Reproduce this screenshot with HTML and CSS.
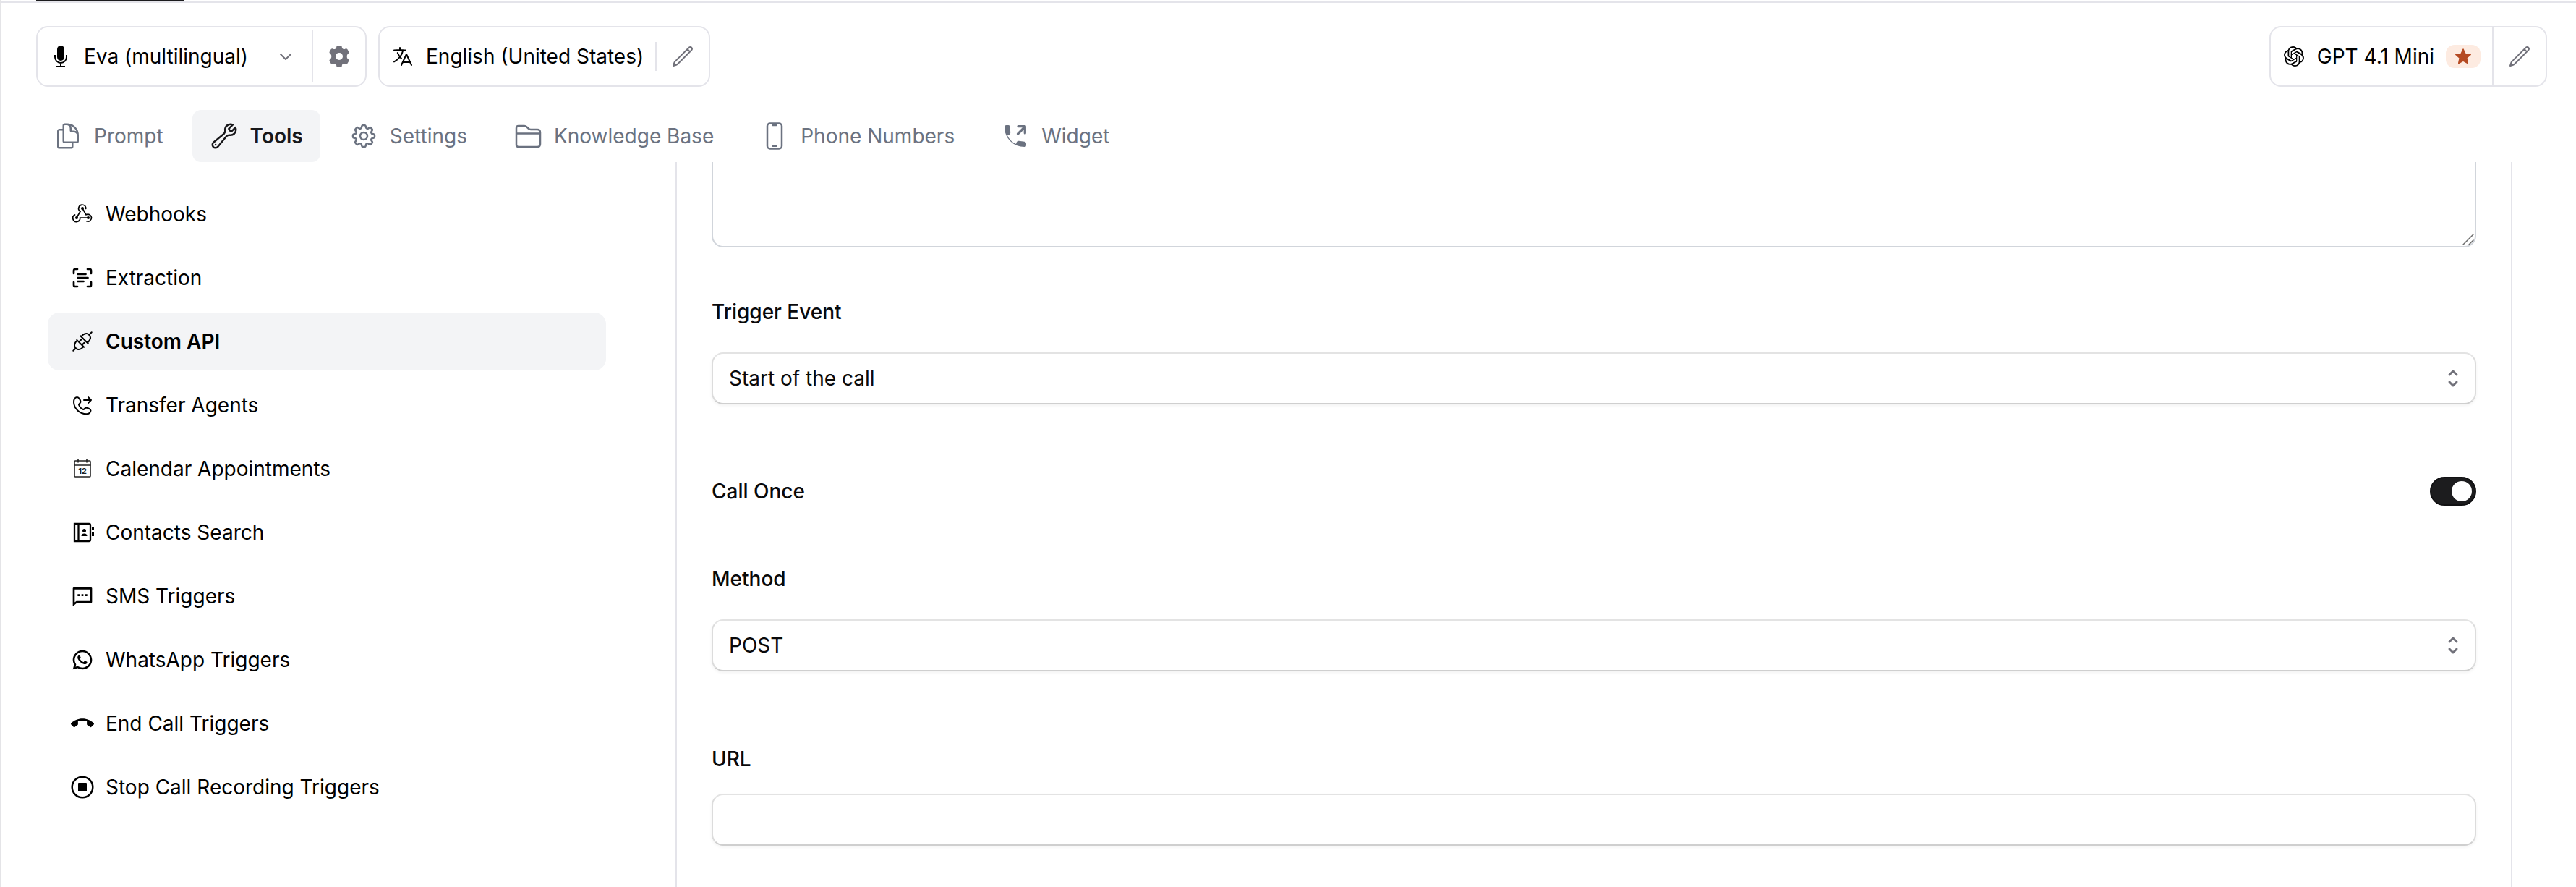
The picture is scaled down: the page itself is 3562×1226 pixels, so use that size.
FILE: index.html
```html
<!DOCTYPE html>
<html lang="en">
  <head>
    <meta charset="UTF-8" />
    <meta name="viewport" content="width=device-width, initial-scale=1.0" />
    <title>Custom API</title>
    <link rel="stylesheet" href="styles.css">
  </head>
  <body>
    <div class="page">
      <div class="top-strip"><div class="top-indicator"></div></div>

      <header class="toolbar">
        <div class="box">
          <button type="button" class="box-button voice">
            <svg class="icon" viewBox="0 0 32 32" fill="none" stroke="currentColor" stroke-width="2">
              <rect x="11" y="1" width="10" height="21" rx="5" fill="currentColor" stroke="none" />
              <path d="M8 14v3a8 8 0 0 0 16 0v-3M16 25v5M10 30h12" />
            </svg>
            <span>Eva (multilingual)</span>
            <svg class="chevron" viewBox="0 0 32 32" fill="none" stroke="currentColor" stroke-width="2" stroke-linecap="round" stroke-linejoin="round">
              <path d="M9 13l7 7 7-7" />
            </svg>
          </button>
          <div class="divider"></div>
          <button type="button" class="box-button gray" aria-label="Voice settings">
            <svg class="icon" viewBox="0 0 32 32" fill="currentColor">
              <path fill-rule="evenodd" d="M14 1h4q1.500 0 1.700 1.500l.3 1.700q.3.900 1.500 1.500 1 .6 2 .2l1.600-.6q1.400-.5 2.200.8l2 3.500q.7 1.300-.4 2.200l-1.300 1.100q-.9.8-.9 3.100t.9 3.100l1.300 1.100q1.100.9.4 2.200l-2 3.500q-.8 1.300-2.200.8l-1.600-.6q-1-.4-2 .2-1.200.6-1.500 1.500l-.3 1.700Q19.500 31 18 31h-4q-1.500 0-1.700-1.500l-.3-1.700q-.3-.9-1.500-1.500-1-.6-2-.2l-1.600.6q-1.400.5-2.200-.8l-2-3.500q-.7-1.300.4-2.200l1.300-1.100q.9-.8.9-3.100t-.9-3.100l-1.300-1.100q-1.100-.9-.4-2.200l2-3.500q.8-1.300 2.200-.8l1.600.6q1 .4 2-.2 1.200-.6 1.500-1.500l.3-1.700Q12.500 1 14 1zM16 11a5 5 0 1 0 0 10 5 5 0 0 0 0-10z" />
            </svg>
          </button>
        </div>

        <div class="box">
          <button type="button" class="box-button language">
            <svg class="icon" viewBox="0 0 24 24" fill="none" stroke="currentColor" stroke-width="1.5" stroke-linecap="round" stroke-linejoin="round">
              <path d="m10.500 21 5.250-11.250L21 21m-9-3h7.500M3 5.621a48.474 48.474 0 0 1 6-.371m0 0c1.120 0 2.233.038 3.334.114M9 5.250V3m3.334 2.364C11.176 10.658 7.690 15.080 3 17.502m9.334-12.138c.896.061 1.785.147 2.666.257m-4.589 8.495a18.023 18.023 0 0 1-3.827-5.802" />
            </svg>
            <span>English (United States)</span>
          </button>
          <div class="divider short"></div>
          <button type="button" class="box-button gray" aria-label="Edit language">
            <svg class="icon" viewBox="0 0 24 24" fill="none" stroke="currentColor" stroke-width="1.5" stroke-linecap="round" stroke-linejoin="round">
              <path d="M16.862 4.487l1.687-1.688a1.875 1.875 0 1 1 2.652 2.652L6.832 19.820a4.500 4.500 0 0 1-1.897 1.130l-2.685.8.8-2.685a4.500 4.500 0 0 1 1.130-1.897L16.863 4.487Zm0 0L19.500 7.125" />
            </svg>
          </button>
        </div>

        <div class="box model">
          <button type="button" class="box-button">
            <svg class="icon openai" viewBox="0 0 24 24" fill="currentColor">
              <path d="M22.2819 9.8211a5.9847 5.9847 0 0 0-.5157-4.9108 6.0462 6.0462 0 0 0-6.5098-2.9A6.0651 6.0651 0 0 0 4.9807 4.1818a5.9847 5.9847 0 0 0-3.9977 2.9 6.0462 6.0462 0 0 0 .7427 7.0966 5.98 5.98 0 0 0 .511 4.9107 6.051 6.051 0 0 0 6.5146 2.9001A5.9847 5.9847 0 0 0 13.2599 24a6.0557 6.0557 0 0 0 5.7718-4.2058 5.9894 5.9894 0 0 0 3.9977-2.9001 6.0557 6.0557 0 0 0-.7475-7.0729zm-9.022 12.6081a4.4755 4.4755 0 0 1-2.8764-1.0408l.1419-.0804 4.7783-2.7582a.7948.7948 0 0 0 .3927-.6813v-6.7369l2.02 1.1686a.071.071 0 0 1 .038.052v5.5826a4.504 4.504 0 0 1-4.4945 4.4944zm-9.6607-4.1254a4.4708 4.4708 0 0 1-.5346-3.0137l.142.0852 4.783 2.7582a.7712.7712 0 0 0 .7806 0l5.8428-3.3685v2.3324a.0804.0804 0 0 1-.0332.0615L9.74 19.9502a4.4992 4.4992 0 0 1-6.1408-1.6464zM2.3408 7.8956a4.485 4.485 0 0 1 2.3655-1.9728V11.6a.7664.7664 0 0 0 .3879.6765l5.8144 3.3543-2.0201 1.1685a.0757.0757 0 0 1-.071 0l-4.8303-2.7865A4.504 4.504 0 0 1 2.3408 7.872zm16.5963 3.8558L13.1038 8.364 15.1192 7.2a.0757.0757 0 0 1 .071 0l4.8303 2.7913a4.4944 4.4944 0 0 1-.6765 8.1042v-5.6772a.79.79 0 0 0-.407-.667zm2.0107-3.0231l-.142-.0852-4.7735-2.7818a.7759.7759 0 0 0-.7854 0L9.409 9.2297V6.8974a.0662.0662 0 0 1 .0284-.0615l4.8303-2.7866a4.4992 4.4992 0 0 1 6.6802 4.66zM8.3065 12.863l-2.02-1.1638a.0804.0804 0 0 1-.038-.0567V6.0742a4.4992 4.4992 0 0 1 7.3757-3.4537l-.142.0805L8.704 5.459a.7948.7948 0 0 0-.3927.6813zm1.0976-2.3654l2.602-1.4998 2.6069 1.4998v2.9994l-2.5974 1.4997-2.6067-1.4997Z" />
            </svg>
            <span>GPT 4.1 Mini</span>
            <span class="badge">
              <svg viewBox="0 0 24 24" fill="currentColor" stroke="currentColor" stroke-width="1.5" stroke-linejoin="round">
                <path d="M12 2l3 6.600 7.200.8-5.400 4.800 1.500 7.300L12 18l-6.300 3.500 1.500-7.300L1.800 9.400 9 8.600z" />
              </svg>
            </span>
          </button>
          <div class="divider full"></div>
          <button type="button" class="box-button gray" aria-label="Edit model">
            <svg class="icon" viewBox="0 0 24 24" fill="none" stroke="currentColor" stroke-width="1.5" stroke-linecap="round" stroke-linejoin="round">
              <path d="M16.862 4.487l1.687-1.688a1.875 1.875 0 1 1 2.652 2.652L6.832 19.820a4.500 4.500 0 0 1-1.897 1.130l-2.685.8.8-2.685a4.500 4.500 0 0 1 1.130-1.897L16.863 4.487Zm0 0L19.500 7.125" />
            </svg>
          </button>
        </div>
      </header>

      <nav class="tabs">
        <a href="#" class="tab">
          <svg viewBox="0 0 24 24"><path d="M15.750 17.250v3.375c0 .621-.504 1.125-1.125 1.125h-9.750a1.125 1.125 0 0 1-1.125-1.125V7.875c0-.621.504-1.125 1.125-1.125H6.750a9.060 9.060 0 0 1 1.500.124m7.500 10.376h3.375c.621 0 1.125-.504 1.125-1.125V11.250c0-4.460-3.243-8.161-7.500-8.876a9.060 9.060 0 0 0-1.500-.124H9.375c-.621 0-1.125.504-1.125 1.125v3.500m7.500 10.375H9.375a1.125 1.125 0 0 1-1.125-1.125v-9.250m12 6.625v-1.875a3.375 3.375 0 0 0-3.375-3.375h-1.500a1.125 1.125 0 0 1-1.125-1.125v-1.500a3.375 3.375 0 0 0-3.375-3.375H9.750" /></svg>
          Prompt
        </a>
        <a href="#" class="tab active">
          <svg viewBox="0 0 24 24"><path d="M21.750 6.750a4.500 4.500 0 0 1-4.884 4.484c-1.076-.091-2.264.071-2.950.904l-7.152 8.684a2.548 2.548 0 1 1-3.586-3.586l8.684-7.152c.833-.686.995-1.874.904-2.950a4.500 4.500 0 0 1 6.336-4.486l-3.276 3.276a3.004 3.004 0 0 0 2.250 2.250l3.276-3.276c.256.565.398 1.192.398 1.852Z" /><path d="M4.867 19.125h.008v.008h-.008v-.008Z" /></svg>
          Tools
        </a>
        <a href="#" class="tab">
          <svg viewBox="0 0 24 24"><path d="M10.343 3.940c.090-.542.560-.940 1.110-.940h1.093c.550 0 1.020.398 1.110.940l.149.894c.070.424.384.764.780.930.398.164.855.142 1.205-.108l.737-.527a1.125 1.125 0 0 1 1.450.120l.773.774c.390.389.440 1.002.120 1.450l-.527.737c-.250.350-.272.806-.107 1.204.165.397.505.710.930.780l.893.150c.543.090.940.559.940 1.109v1.094c0 .550-.397 1.020-.940 1.110l-.894.149c-.424.070-.764.383-.929.780-.165.398-.143.854.107 1.204l.527.738c.320.447.269 1.060-.120 1.450l-.774.773a1.125 1.125 0 0 1-1.449.120l-.738-.527c-.350-.250-.806-.272-1.203-.107-.398.165-.710.505-.781.929l-.149.894c-.090.542-.560.940-1.110.940h-1.094c-.550 0-1.019-.398-1.110-.940l-.148-.894c-.071-.424-.384-.764-.781-.930-.398-.164-.854-.142-1.204.108l-.738.527c-.447.320-1.060.269-1.450-.120l-.773-.774a1.125 1.125 0 0 1-.120-1.450l.527-.737c.250-.350.272-.806.108-1.204-.165-.397-.506-.710-.930-.780l-.894-.150c-.542-.090-.940-.560-.940-1.109v-1.094c0-.550.398-1.020.940-1.110l.894-.149c.424-.070.765-.383.930-.780.165-.398.143-.854-.108-1.204l-.526-.738a1.125 1.125 0 0 1 .120-1.450l.773-.773a1.125 1.125 0 0 1 1.450-.120l.737.527c.350.250.807.272 1.204.107.397-.165.710-.505.780-.929l.150-.894Z" /><circle cx="12" cy="12" r="3" /></svg>
          Settings
        </a>
        <a href="#" class="tab">
          <svg class="folder" viewBox="0 0 40 40"><path d="M4 33V9q0-3 3-3h8q2 0 3.300 1.300l2.400 2.400Q22 11 24 11h9q4 0 4 4v16q0 4-4 4H7q-3 0-3-3zM4 16.500h33" /></svg>
          Knowledge Base
        </a>
        <a href="#" class="tab">
          <svg viewBox="0 0 24 24"><path d="M10.500 1.500H8.250A2.250 2.250 0 0 0 6 3.750v16.500a2.250 2.250 0 0 0 2.250 2.250h7.500A2.250 2.250 0 0 0 18 20.250V3.750a2.250 2.250 0 0 0-2.250-2.250H13.500m-3 0V3h3V1.500m-3 0h3m-3 18.750h3" /></svg>
          Phone Numbers
        </a>
        <a href="#" class="tab">
          <svg viewBox="-5 -5 40 40"><path fill="currentColor" stroke="none" d="M2.500 0H5.500Q7.300 0 7.500 2L8.200 10Q8.200 13 5.500 13.500L4 14C6 19 11 24 16 26L16.700 23.800Q17.500 21.600 19.800 21.800L27.500 22.800Q30 23.200 30 25.500V28Q30 30 28 30C12 30 0 18 0 2.500Q0 0 2.500 0z" /><path stroke-width="3.300" d="M18.500 12L27.500 3M19 1.700h9.300V11" /></svg>
          Widget
        </a>
      </nav>

      <div class="content">
        <nav class="sidebar">
          <a href="#" class="side-item">
            <svg viewBox="0 0 32 32" fill="none" stroke="currentColor" stroke-width="1.700" stroke-linecap="round"><path d="M20.700 8.500A5 5 0 1 0 13 12.300L8.200 20.500M16 8l5 8.800a5 5 0 1 1 .8 9M5.500 17A5 5 0 1 0 12.700 21H24" /><g fill="currentColor" stroke="none"><circle cx="16" cy="8" r="2" /><circle cx="8" cy="21" r="2" /><circle cx="24" cy="21" r="2" /></g></svg>
            Webhooks
          </a>
          <a href="#" class="side-item">
            <svg viewBox="0 0 32 32" fill="none" stroke="currentColor" stroke-width="2.700" stroke-linecap="round"><path d="M4 10V6q0-2 2-2h3M23 4h3q2 0 2 2v4M28 22v4q0 2-2 2h-3M9 28H6q-2 0-2-2v-4M9.500 11h11M9.500 16h14M9.500 21h8" /></svg>
            Extraction
          </a>
          <a href="#" class="side-item active">
            <svg viewBox="0 0 32 32" fill="none" stroke="currentColor" stroke-width="2" stroke-linecap="round"><g transform="rotate(-45 16 16)"><path d="M-2 16H3M12 9v14M12 10H8.500Q3 11 3 16t5.500 6H12M12 13h4.500M12 19h4.500M19.500 8.500v15M19.500 10h3.500Q29 11 29 16t-6 6h-3.500M29 16h5" /></g></svg>
            Custom API
          </a>
          <a href="#" class="side-item">
            <svg viewBox="0 0 32 32" fill="none" stroke="currentColor" stroke-width="2" stroke-linecap="round" stroke-linejoin="round"><path d="M8.500 5C5 5.500 4 8.500 4 12c.5 9 8 16 17.500 16.200 3.500 0 5.500-2.200 6-4.700 0-1.700-4-3.700-6.300-4-1.700 0-2.500 2.500-4 2.500-2.700-1-5.200-3.700-6.200-6.500 0-1.500 2.700-2.500 2.500-4-.4-2.700-2.400-6.700-5-6.500z" /><path d="M18 9h10M24 5l4 4-4 4" /></svg>
            Transfer Agents
          </a>
          <a href="#" class="side-item">
            <svg viewBox="0 0 32 32" fill="none" stroke="#222" stroke-width="1.600" stroke-linecap="round"><rect x="5" y="5" width="22" height="22" rx="1" /><path d="M5 11h22M10 3v4M22 3v4" /><text class="cal-day" x="16" y="23" text-anchor="middle">12</text></svg>
            Calendar Appointments
          </a>
          <a href="#" class="side-item">
            <svg viewBox="0 0 32 32" fill="none" stroke="currentColor" stroke-width="2.300"><path d="M5 4h20q2 0 2 2v20q0 2-2 2H5zM10.500 4v24" /><g fill="currentColor" stroke="none"><circle cx="18.500" cy="13.500" r="2.500" /><path d="M14.500 21q0-3.500 4-3.500t4 3.500zM29 8h3v5h-3zM29 16h3v5h-3z" /></g></svg>
            Contacts Search
          </a>
          <a href="#" class="side-item">
            <svg viewBox="0 0 24 24" fill="currentColor"><path d="M6.455 19L2 22.500V4a1 1 0 0 1 1-1h18a1 1 0 0 1 1 1v14a1 1 0 0 1-1 1H6.455ZM5.763 17H20V5H4v13.385L5.763 17ZM11 10h2v2h-2v-2ZM7 10h2v2H7v-2ZM15 10h2v2h-2v-2Z" /></svg>
            SMS Triggers
          </a>
          <a href="#" class="side-item">
            <svg viewBox="0 0 24 24" fill="currentColor"><path d="M7.254 18.494l.724.423A7.953 7.953 0 0 0 12.001 20a8 8 0 1 0-8-8c0 1.436.377 2.813 1.084 4.024l.422.724-.653 2.401 2.400-.655ZM2.005 22l1.352-4.968A9.954 9.954 0 0 1 2.001 12c0-5.523 4.477-10 10-10s10 4.477 10 10-4.477 10-10 10a9.954 9.954 0 0 1-5.030-1.355L2.005 22ZM8.392 7.308c.134-.009.268-.011.403-.004.054.004.108.010.162.016.159.018.334.115.393.249.298.676.588 1.357.868 2.041.062.151.025.347-.093.536a3.800 3.800 0 0 1-.263.372c-.113.145-.356.411-.356.411s-.099.118-.061.265c.014.056.060.137.102.205l.059.095c.256.427.600.860 1.020 1.268.120.116.237.236.363.346.468.413.998.750 1.570 1 .084.036.128.056.257.111.062.026.126.049.191.066.187.045.299-.049.368-.130.723-.877.790-.934.795-.934.095-.100.244-.135.378-.124.061.004.121.015.177.041.531.243 1.401.621 1.401.621l.581.261c.098.047.187.158.191.266.010.190.002.250-.014.373-.031.259-.110.570-.188.733a1.160 1.160 0 0 1-.209.302c-.170.170-.300.260-.456.378-.160.100-.250.150-.382.220a2 2 0 0 1-.833.231c-.186.009-.371.023-.556.013-.008 0-.568-.087-.568-.087a9.448 9.448 0 0 1-3.841-2.046c-.225-.199-.435-.413-.648-.626-.889-.885-1.562-1.840-1.970-2.741A3.472 3.472 0 0 1 6.901 9.620a2.729 2.729 0 0 1 .564-1.678c.073-.095.142-.194.261-.306.127-.120.208-.184.294-.228a.964.964 0 0 1 .372-.100Z" /></svg>
            WhatsApp Triggers
          </a>
          <a href="#" class="side-item">
            <svg viewBox="0 0 24 24" fill="currentColor"><path d="M12 9c-1.600 0-3.150.250-4.600.720v3.100c0 .390-.230.740-.560.900-.980.490-1.870 1.120-2.660 1.850-.180.180-.430.280-.700.280-.280 0-.530-.110-.710-.290L.290 13.080A.990.990 0 0 1 0 12.380c0-.280.110-.530.290-.710C3.340 8.780 7.460 7 12 7s8.660 1.780 11.710 4.670c.180.180.290.430.290.710 0 .280-.110.530-.290.700l-2.480 2.480c-.180.180-.430.290-.710.290-.270 0-.520-.110-.700-.280a11.270 11.270 0 0 0-2.670-1.850.996.996 0 0 1-.560-.900v-3.100C15.150 9.250 13.600 9 12 9z" /></svg>
            End Call Triggers
          </a>
          <a href="#" class="side-item">
            <svg viewBox="0 0 32 32" fill="none" stroke="currentColor" stroke-width="2.500"><circle cx="16" cy="16" r="14.300" /><rect x="10" y="10" width="12" height="12" rx="1" fill="currentColor" stroke="none" /></svg>
            Stop Call Recording Triggers
          </a>
        </nav>

        <main class="panel">
          <form>
            <!-- scrolled area, only the end of the textarea is visible -->
            <div class="scrolled">
              <textarea class="description" aria-label="Description"></textarea>
              <svg class="grip" viewBox="0 0 16 16" fill="none" stroke="#6b6b6b" stroke-width="1.500" stroke-linecap="round"><path d="M1 15L15 1M9 15l6-6" /></svg>
            </div>

            <label class="label" for="trigger">Trigger Event</label>
            <div class="select-wrap">
              <select id="trigger" class="control">
                <option>Start of the call</option>
              </select>
              <svg class="arrows" viewBox="0 0 32 32"><path d="M11 11l5-5 5 5M11 21l5 5 5-5" /></svg>
            </div>

            <div class="switch-row">
              <label for="once">Call Once</label>
              <input type="checkbox" id="once" class="switch" checked />
            </div>

            <label class="label" for="method">Method</label>
            <div class="select-wrap">
              <select id="method" class="control">
                <option>POST</option>
              </select>
              <svg class="arrows" viewBox="0 0 32 32"><path d="M11 11l5-5 5 5M11 21l5 5 5-5" /></svg>
            </div>

            <label class="label url" for="url">URL</label>
            <input type="text" id="url" class="control" />
          </form>
        </main>
      </div>
    </div>
  </body>
</html>
```
FILE: styles.css
```css
* {
  box-sizing: border-box;
}
body {
  margin: 0;
  font-family: Inter, "Liberation Sans", sans-serif;
  font-size: 28px;
  line-height: 48px;
  color: #09090b;
  background-color: #fff;
}
button,
input,
select,
textarea {
  font: inherit;
  color: inherit;
}
svg {
  display: block;
  flex-shrink: 0;
}
.page {
  display: flex;
  flex-direction: column;
  height: 100vh;
  overflow: hidden;
  border-left: 2px solid #e4e4e7;
}
.top-strip {
  padding-left: 48px;
  border-bottom: 2px solid #e4e4ea;
}
.top-indicator {
  width: 205px;
  height: 2px;
  background-color: #1c1c1e;
}

/* toolbar */
.toolbar {
  display: flex;
  gap: 16px;
  padding: 32px 40px 32px 48px;
  color: #000;
}
.box {
  display: flex;
  align-items: center;
  height: 84px;
  border: 2px solid #e4e4ea;
  border-radius: 16px;
}
.model {
  margin-left: auto;
}
.box-button {
  display: flex;
  align-items: center;
  gap: 16px;
  height: 80px;
  padding: 0 16px;
  border: none;
  background: none;
  white-space: nowrap;
  cursor: pointer;
}
.gray {
  padding: 0 20px;
  color: #71717a;
}
.icon,
.chevron {
  width: 32px;
  height: 32px;
}
.openai {
  padding: 2px;
}
.chevron {
  margin-left: 20px;
  color: #71717a;
}
.voice {
  padding-right: 20px;
}
.divider {
  width: 2px;
  height: 72px;
  background-color: #e4e4ea;
}
.divider.short {
  height: 40px;
}
.divider.full {
  height: 80px;
}
.badge {
  display: flex;
  align-items: center;
  padding: 4px 12px;
  border-radius: 12px;
  color: #b54a22;
  background-color: #fdebe1;
}
.badge svg {
  width: 24px;
  height: 24px;
}

/* tabs */
.tabs {
  display: flex;
  gap: 16px;
  padding-left: 48px;
}
.tab {
  display: flex;
  align-items: center;
  gap: 16px;
  height: 72px;
  padding: 0 24px;
  border-radius: 12px;
  color: #6b7280;
  text-decoration: none;
  white-space: nowrap;
}
.tab svg {
  width: 40px;
  height: 40px;
  fill: none;
  stroke: currentColor;
  stroke-width: 1.5;
  stroke-linecap: round;
  stroke-linejoin: round;
}
.tab .folder {
  stroke-width: 2.5;
}
.tab.active {
  color: #18181b;
  background-color: #f3f4f6;
  font-weight: 600;
}

/* content */
.content {
  display: flex;
  flex: 1;
  gap: 96px;
  min-height: 0;
  padding: 0 88px 0 64px;
}
.sidebar {
  display: flex;
  flex-direction: column;
  gap: 8px;
  width: 772px;
  padding-top: 32px;
}
.side-item {
  display: flex;
  align-items: center;
  gap: 16px;
  height: 80px;
  padding: 0 32px;
  border-radius: 16px;
  color: #000;
  text-decoration: none;
}
.side-item svg {
  width: 32px;
  height: 32px;
}
.side-item.active {
  background-color: #f3f4f6;
  font-weight: 600;
}
.cal-day {
  font-size: 11px;
  font-weight: 700;
  fill: #222;
  stroke: none;
}
.panel {
  flex: 1;
  padding: 0 48px;
  border-left: 2px solid #e4e4ea;
  border-right: 2px solid #e4e4ea;
}
.scrolled {
  position: relative;
  display: flex;
  flex-direction: column;
  justify-content: flex-end;
  height: 118px;
  margin-bottom: 65px;
  overflow: hidden;
}
.description {
  flex-shrink: 0;
  height: 240px;
  padding: 16px 24px;
  border: 2px solid #d1d5db;
  border-radius: 16px;
  resize: none;
}
.grip {
  position: absolute;
  right: 3px;
  bottom: 3px;
  width: 16px;
  height: 16px;
}
.label {
  display: block;
  margin-bottom: 32px;
  font-weight: 500;
}
.label.url {
  margin-bottom: 24px;
}
.control {
  display: block;
  width: 100%;
  height: 72px;
  padding: 0 22px;
  border: 2px solid #dcdcdc;
  border-top-color: #e3e3e3;
  border-bottom-color: #cfcfcf;
  border-radius: 16px;
  background-color: #fff;
  box-shadow: 0 2px 4px rgba(0, 0, 0, 0.05);
  appearance: none;
}
.select-wrap {
  position: relative;
  margin-bottom: 97px;
}
.arrows {
  position: absolute;
  top: 20px;
  right: 16px;
  width: 32px;
  height: 32px;
  fill: none;
  stroke: #71717a;
  stroke-width: 3;
  stroke-linecap: round;
  stroke-linejoin: round;
  pointer-events: none;
}
.switch-row {
  display: flex;
  align-items: center;
  justify-content: space-between;
  height: 46px;
  margin-bottom: 74px;
  font-weight: 500;
}
.switch {
  width: 64px;
  height: 40px;
  margin: 0;
  padding: 4px;
  border: 2px solid #111113;
  border-radius: 20px;
  background-color: #1c1c1e;
  appearance: none;
  cursor: pointer;
}
.switch::before {
  content: "";
  display: block;
  width: 28px;
  height: 28px;
  border-radius: 14px;
  background-color: #fff;
}
.switch:checked::before {
  margin-left: auto;
}
```
